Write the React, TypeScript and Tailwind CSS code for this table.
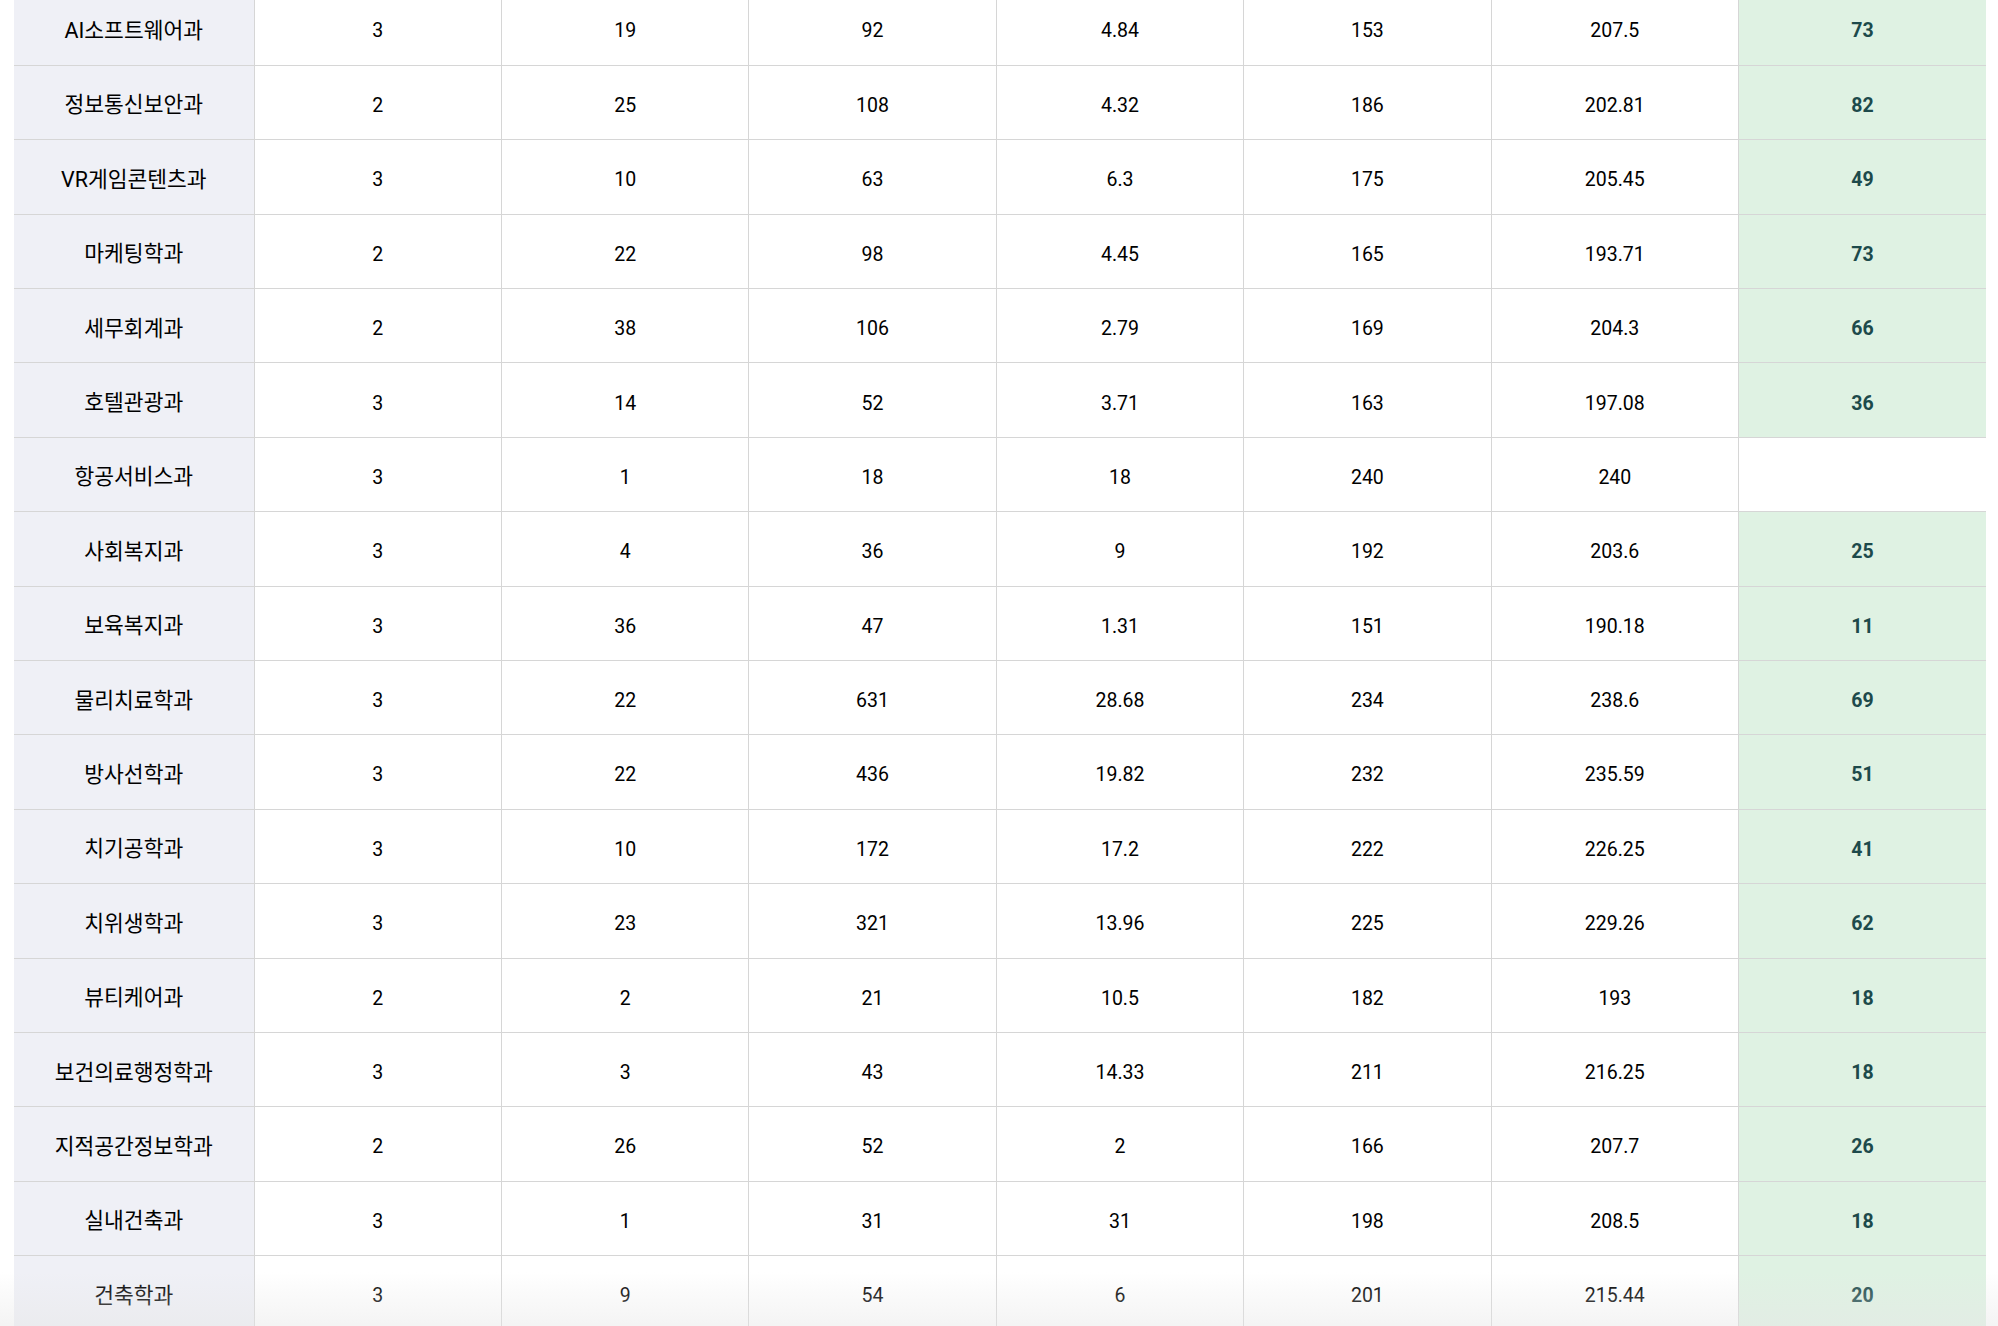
const rows: [string, string, string, string, string, string, string, string][] = [
  ["AI소프트웨어과", "3", "19", "92", "4.84", "153", "207.5", "73"],
  ["정보통신보안과", "2", "25", "108", "4.32", "186", "202.81", "82"],
  ["VR게임콘텐츠과", "3", "10", "63", "6.3", "175", "205.45", "49"],
  ["마케팅학과", "2", "22", "98", "4.45", "165", "193.71", "73"],
  ["세무회계과", "2", "38", "106", "2.79", "169", "204.3", "66"],
  ["호텔관광과", "3", "14", "52", "3.71", "163", "197.08", "36"],
  ["항공서비스과", "3", "1", "18", "18", "240", "240", ""],
  ["사회복지과", "3", "4", "36", "9", "192", "203.6", "25"],
  ["보육복지과", "3", "36", "47", "1.31", "151", "190.18", "11"],
  ["물리치료학과", "3", "22", "631", "28.68", "234", "238.6", "69"],
  ["방사선학과", "3", "22", "436", "19.82", "232", "235.59", "51"],
  ["치기공학과", "3", "10", "172", "17.2", "222", "226.25", "41"],
  ["치위생학과", "3", "23", "321", "13.96", "225", "229.26", "62"],
  ["뷰티케어과", "2", "2", "21", "10.5", "182", "193", "18"],
  ["보건의료행정학과", "3", "3", "43", "14.33", "211", "216.25", "18"],
  ["지적공간정보학과", "2", "26", "52", "2", "166", "207.7", "26"],
  ["실내건축과", "3", "1", "31", "31", "198", "208.5", "18"],
  ["건축학과", "3", "9", "54", "6", "201", "215.44", "20"],
];

export default function App() {
  return (
    <div className="relative h-[1326px] overflow-hidden bg-white font-['Roboto','Noto_Sans_CJK_KR',sans-serif] text-[19.5px] text-black">
      <div className="-mt-[9px] pl-[14px] pr-[12px]">
        <table className="w-full table-fixed border-collapse">
          <colgroup>
            <col className="w-[240px]" />
          </colgroup>
          <tbody>
            {rows.map((r) => (
              <tr key={r[0]} className="h-[74.4px] border-b border-[#d6d6d6]">
                <td className="bg-[#eff0f6] pt-[6px] text-center text-[21.5px]">{r[0]}</td>
                {r.slice(1, 7).map((v, i) => (
                  <td key={i} className="border-l border-[#d6d6d6] pt-[6px] text-center">
                    {v}
                  </td>
                ))}
                <td
                  className={
                    r[7]
                      ? "border-l border-[#d6d6d6] bg-[#dff2e3] pt-[6px] text-center font-bold text-[#1d4a4b]"
                      : "border-l border-[#d6d6d6] bg-white"
                  }
                >
                  {r[7]}
                </td>
              </tr>
            ))}
          </tbody>
        </table>
      </div>
      {/* scroll fade at the bottom */}
      <div className="pointer-events-none absolute inset-x-0 bottom-0 h-[54px] bg-linear-to-b from-white/0 to-[#e6e6e6]/45" />
    </div>
  );
}
